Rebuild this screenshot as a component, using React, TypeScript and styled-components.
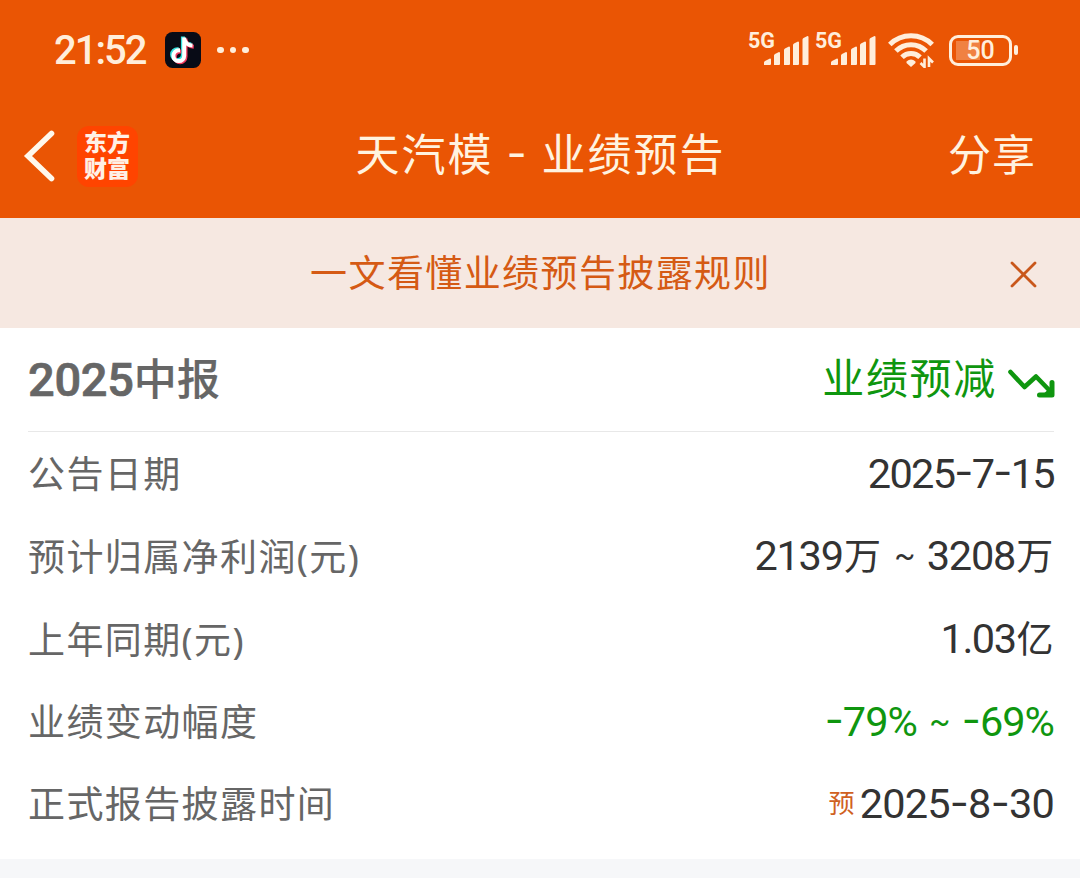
import React from 'react';
import styled, { createGlobalStyle } from 'styled-components';

const GlobalStyle = createGlobalStyle`
  * { box-sizing: border-box; }
  body {
    margin: 0;
    background: #f6f7f9;
    font-family: Roboto, "Noto Sans CJK SC", sans-serif;
  }
`;

const Page = styled.div`
  width: 1080px;
  height: 878px;
  overflow: hidden;
  display: flex;
  flex-direction: column;
`;

const Header = styled.header`
  height: 218px;
  background: #ea5504;
  color: #fff3e0;
`;

const StatusBar = styled.div`
  height: 100px;
  padding: 0 62px 0 54px;
  display: flex;
  align-items: center;
  justify-content: space-between;
`;

const StatusGroup = styled.div`
  display: flex;
  align-items: center;
  svg { display: block; }
`;

const Clock = styled.span`
  width: 111px;
  padding-top: 2px;
  font-size: 40px;
  font-weight: 500;
  line-height: 48px;
  letter-spacing: -2px;
  color: #ffeedb;
  white-space: nowrap;
`;

const NavBar = styled.nav`
  height: 112px;
  padding: 0 44px 0 23px;
  display: grid;
  grid-template-columns: 200px 1fr 180px;
  align-items: center;
`;

const NavLeft = styled.div`
  display: flex;
  align-items: center;
  gap: 21px;
  svg { display: block; }
`;

const AppLogo = styled.div`
  width: 61px;
  height: 61px;
  padding: 2px 7px 0;
  border-radius: 12px;
  background: #ff4400;
  color: #fff0e6;
  font-family: "Noto Sans CJK SC", sans-serif;
  font-size: 23px;
  font-weight: 900;
  line-height: 26px;
  word-break: break-all;
`;

const Title = styled.h1`
  margin: 0;
  height: 60px;
  padding-left: 2px;
  text-align: center;
  font-size: 44px;
  font-weight: 400;
  line-height: 60px;
  letter-spacing: 2px;
  white-space: nowrap;
`;

const TitleDash = styled.span`
  display: inline-block;
  line-height: 1;
  font-family: Inter, sans-serif;
  transform: translateY(-2px);
`;

const Share = styled.span`
  justify-self: end;
  font-size: 43px;
  line-height: 60px;
  letter-spacing: 1px;
`;

const Banner = styled.div`
  height: 110px;
  padding: 2px 43px 0;
  background: #f6e8e1;
  color: #d55a14;
  display: grid;
  grid-template-columns: 27px 1fr 27px;
  align-items: center;
  svg { display: block; }
`;

const BannerText = styled.span`
  padding: 2px 0 0 1px;
  text-align: center;
  font-size: 37px;
  line-height: 54px;
  letter-spacing: 1.4px;
`;

const Card = styled.section`
  height: 531px;
  padding: 0 26px 0 28px;
  background: #fff;
`;

const CardHead = styled.div`
  height: 104px;
  border-bottom: 1px solid #e8e8e8;
  display: flex;
  align-items: center;
  justify-content: space-between;
`;

const Period = styled.h2`
  margin: 0;
  color: #666;
  font-size: 47px;
  font-weight: 500;
  line-height: 60px;
  letter-spacing: -0.3px;
  -webkit-text-stroke: 0.7px #666;
  display: flex;
  align-items: center;
`;

const PeriodName = styled.span`
  font-size: 43px;
  letter-spacing: 0.4px;
  -webkit-text-stroke: 0.2px #666;
`;

const Trend = styled.div`
  display: flex;
  align-items: center;
  color: #0f960f;
  font-size: 42px;
  line-height: 60px;
  letter-spacing: 1.7px;
  svg { display: block; margin: 7px -1px 0 11px; }
`;

const Row = styled.div`
  height: 82.6px;
  display: flex;
  align-items: center;
  justify-content: space-between;
`;

const Label = styled.span`
  padding-top: 5px;
  color: #666;
  font-size: 37px;
  line-height: 54px;
  letter-spacing: 1.4px;
`;

const Paren = styled.span`
  font-family: "Noto Sans", sans-serif;
`;

const Value = styled.span<{ $down?: boolean; $spacing?: number }>`
  padding-top: 1px;
  display: flex;
  align-items: center;
  color: ${(p) => (p.$down ? '#0f960f' : '#333')};
  font-size: 41.5px;
  line-height: 54px;
  letter-spacing: ${(p) => p.$spacing ?? -0.8}px;
  white-space: pre;
`;

const Dash = styled.span`
  margin-bottom: 5px;
  font-family: Inter, sans-serif;
`;

const Tilde = styled.span`
  width: 45px;
  text-align: center;
  font-size: 31px;
`;

const Unit = styled.span`
  padding: 4px 2px 0 1px;
  font-size: 37px;
`;

const Tag = styled.span`
  margin-right: 6px;
  color: #d0611f;
  font-size: 26px;
`;

const TikTokIcon = () => (
  <svg width="36" height="36" viewBox="0 0 36 36">
    <rect width="36" height="36" rx="7.5" fill="#080b16" />
    <g fill="none" strokeWidth="4" strokeLinejoin="round">
      <path d="M18.7 5v18.2a5.4 5.4 0 1 1-5.4-5.4h1.2M18.7 6c.8 4.500 4 6.800 8.300 7.100" stroke="#35e0df" transform="translate(-.8 -.6)" />
      <path d="M19.700 6v18.200a5.400 5.400 0 1 1-5.400-5.400h1.200M19.700 7c.8 4.500 4 6.800 8.300 7.100" stroke="#f23a5f" transform="translate(.8 .6)" />
      <path d="M19.200 5.500v18.200a5.400 5.400 0 1 1-5.400-5.400h1.200M19.200 6.500c.8 4.500 4 6.800 8.300 7.100" stroke="#fff" />
    </g>
  </svg>
);

const Dots = styled.div`
  margin-left: 16px;
  display: flex;
  gap: 6px;
`;

const Dot = styled.i`
  width: 6.5px;
  height: 6.5px;
  border-radius: 50%;
  background: #ffeedb;
`;

const Signal = styled.div`
  width: 67px;
  height: 40px;
  display: flex;
  align-items: flex-start;
  color: #ffeedb;
  font-size: 21.5px;
  font-weight: 700;
  line-height: 22px;
  svg { margin: 6px 0 0 -11px; flex: none; }
`;

const NetworkSignal = () => (
  <Signal>
    5G
    <svg width="45" height="30" viewBox="0 0 45 30" fill="#ffeedb">
      <path d="M0 29v-2.500q0-1 1-1.500l5-2.500q1 0 1 1V28q0 1-1 1zM10 29V19.500q0-1 1-1.500l4-2q1 0 1 1V28q0 1-1 1zM20 29V14q0-1 1-1.500l4-2q1 0 1 1V28q0 1-1 1zM29 29V9q0-1 1-1.500l4-2q1 0 1 1V28q0 1-1 1zM38.500 29V3.500q0-1 1-1.500l4-2q1 0 1 1V28q0 1-1 1z" />
    </svg>
  </Signal>
);

const Wifi = styled.svg`
  margin-left: 6px;
`;

const WifiIcon = () => (
  <Wifi width="46" height="36" viewBox="0 0 46 36" fill="none">
    <g stroke="#ffeedb" strokeWidth="5">
      <path d="M1.800 12.500C13.500.8 32.500.8 44.200 12.500" />
      <path d="M7.900 19C16.200 10.500 29.800 10.500 38.100 19" />
      <path d="M14 25.200C19 20.200 27 20.200 32 25.200" />
    </g>
    <path d="M18.500 29.500q4.500-4 9 0v1.500L23 35l-4.500-4z" fill="#ffeedb" />
    <path d="M36.500 26.500v8.500l-4-4M41 35v-8.500l4 4" stroke="#ffeedb" strokeWidth="2.600" />
  </Wifi>
);

const Battery = styled.div`
  position: relative;
  width: 63px;
  height: 31px;
  margin: 0 6px 0 15px;
  border: 3px solid #ffeedb;
  border-radius: 9px;
  color: #ffeedb;
  background: linear-gradient(#f08142, #f08142) 4px 3px / 24px 19px no-repeat;
  font-size: 25px;
  font-weight: 500;
  line-height: 26px;
  text-align: center;
  &::after {
    content: "";
    position: absolute;
    right: -9px;
    top: 7px;
    width: 4px;
    height: 10px;
    border-radius: 2px;
    background: #ffeedb;
  }
`;

const BackIcon = () => (
  <svg width="33" height="52" viewBox="0 0 33 52" fill="none">
    <path d="M28.500 3.500 5 26l23.500 22.500" stroke="#fff8ec" strokeWidth="5.600" strokeLinecap="round" />
  </svg>
);

const CloseIcon = () => (
  <svg width="27" height="27" viewBox="0 0 27 27" fill="none">
    <path d="m2 2 23 23M25 2 2 25" stroke="#c9571b" strokeWidth="2.800" strokeLinecap="round" />
  </svg>
);

const TrendDownIcon = () => (
  <svg width="47" height="29" viewBox="0 0 47 29" fill="none">
    <path d="M2.500 3 16.500 18 28 7.500 43 23" stroke="#0f960f" strokeWidth="4.600" strokeLinecap="round" strokeLinejoin="round" />
    <path d="M31.500 26H44V13.500" stroke="#0f960f" strokeWidth="5" strokeLinecap="round" strokeLinejoin="round" />
    <path d="M35 25.500 43.500 17v8.500z" fill="#0f960f" />
  </svg>
);

export default function App() {
  return (
    <Page>
      <GlobalStyle />
      <Header>
        <StatusBar>
          <StatusGroup>
            <Clock>21:52</Clock>
            <TikTokIcon />
            <Dots><Dot /><Dot /><Dot /></Dots>
          </StatusGroup>
          <StatusGroup>
            <NetworkSignal />
            <NetworkSignal />
            <WifiIcon />
            <Battery>50</Battery>
          </StatusGroup>
        </StatusBar>
        <NavBar>
          <NavLeft>
            <BackIcon />
            <AppLogo>东方财富</AppLogo>
          </NavLeft>
          <Title>天汽模 <TitleDash>-</TitleDash> 业绩预告</Title>
          <Share>分享</Share>
        </NavBar>
      </Header>
      <Banner>
        <span />
        <BannerText>一文看懂业绩预告披露规则</BannerText>
        <CloseIcon />
      </Banner>
      <Card>
        <CardHead>
          <Period>2025<PeriodName>中报</PeriodName></Period>
          <Trend>业绩预减<TrendDownIcon /></Trend>
        </CardHead>
        <Row>
          <Label>公告日期</Label>
          <Value $spacing={-1.7}>2025<Dash>-</Dash>7<Dash>-</Dash>15</Value>
        </Row>
        <Row>
          <Label>预计归属净利润<Paren>(</Paren>元<Paren>)</Paren></Label>
          <Value $spacing={-1.2}>2139<Unit>万</Unit><Tilde> ~ </Tilde>3208<Unit>万</Unit></Value>
        </Row>
        <Row>
          <Label>上年同期<Paren>(</Paren>元<Paren>)</Paren></Label>
          <Value $spacing={-1.5}>1.03<Unit>亿</Unit></Value>
        </Row>
        <Row>
          <Label>业绩变动幅度</Label>
          <Value $down $spacing={-1}><Dash>-</Dash>79%<Tilde> ~ </Tilde><Dash>-</Dash>69%</Value>
        </Row>
        <Row>
          <Label>正式报告披露时间</Label>
          <Value><Tag>预</Tag>2025<Dash>-</Dash>8<Dash>-</Dash>30</Value>
        </Row>
      </Card>
    </Page>
  );
}
